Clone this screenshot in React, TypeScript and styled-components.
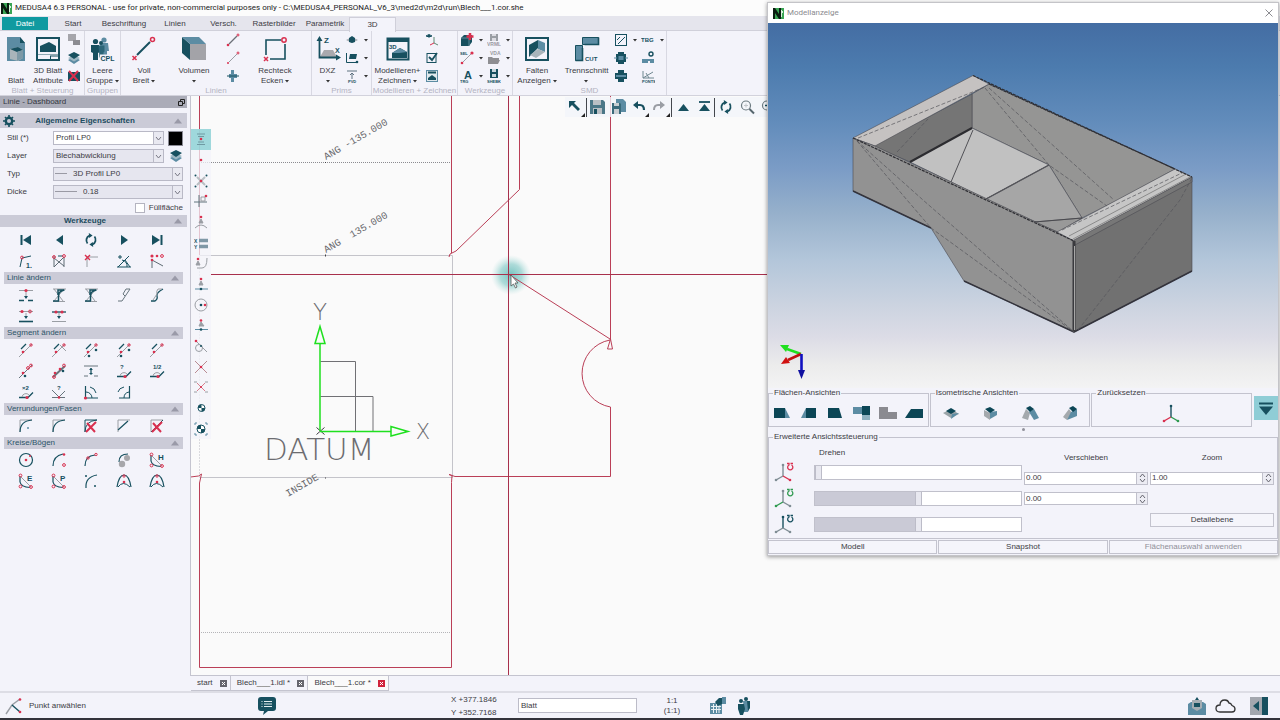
import React from "react";
import styled, { createGlobalStyle } from "styled-components";

const D = "#17505f";
const M = "#5c8ca3";
const R = "#d9304f";
const G = "#9a9ea4";
const RED = "#ba3f57";

const Global = createGlobalStyle`
  * { box-sizing: border-box; }
  body { margin: 0; background: #f3f3fa; font-family: "Liberation Sans", Arial, sans-serif; font-size: 8px; line-height: 10px; color: #3c3c44; }
  button, input, select { font: inherit; color: inherit; margin: 0; }
  svg { display: block; flex: none; }
`;

/* ---------- frame ---------- */
const Page = styled.div`
  position: relative;
  min-height: 100vh;
  display: flex;
  flex-direction: column;
  overflow: hidden;
`;
const TitleBar = styled.header`
  display: flex;
  align-items: center;
  gap: 3px;
  height: 16px;
  padding-left: 1px;
  background: #fcfcfc;
  font-family: Roboto, "Open Sans", sans-serif;
  font-size: 8px;
  color: #222;
  white-space: nowrap;
`;
const TabBar = styled.nav`
  display: flex;
  height: 15px;
  padding: 1px 0 0 2px;
  background: #e5e5ed;
  border-bottom: 1px solid #d0d0da;
`;
const MenuTab = styled.button<{ $w: number; $kind?: "file" | "active" }>`
  width: ${(p) => p.$w}px;
  height: ${(p) => (p.$kind === "active" ? 15 : 13)}px;
  padding: 0;
  border: 1px solid ${(p) => (p.$kind === "active" ? "#cfcfd9" : "transparent")};
  border-width: ${(p) => (p.$kind === "active" ? "1px 1px 0" : "0")};
  background: ${(p) => (p.$kind === "file" ? "#109aa0" : p.$kind === "active" ? "#f3f3fa" : "none")};
  color: ${(p) => (p.$kind === "file" ? "#fff" : "#3c3c44")};
  white-space: nowrap;
`;

/* ---------- ribbon ---------- */
const Ribbon = styled.div`
  display: flex;
  height: 65px;
  padding-left: 1px;
  border-bottom: 1px solid #d2d2dc;
`;
const RibbonGroup = styled.section<{ $w: number }>`
  display: flex;
  flex-direction: column;
  width: ${(p) => p.$w}px;
  border-right: 1px solid #d8d8e2;
`;
const RibbonBody = styled.div<{ $pad?: number }>`
  display: flex;
  height: 55px;
  padding-left: ${(p) => p.$pad ?? 0}px;
`;
const RibbonLabel = styled.div`
  height: 9px;
  line-height: 9px;
  text-align: center;
  color: #b4b4c2;
  white-space: nowrap;
  overflow: hidden;
`;
const BigButton = styled.button<{ $w: number }>`
  display: flex;
  flex-direction: column;
  align-items: center;
  flex: none;
  width: ${(p) => p.$w}px;
  gap: 4px;
  padding: 5px 0 0;
  border: 0;
  background: none;
  line-height: 10px;
  white-space: nowrap;
`;
const Line = styled.span`
  display: flex;
  align-items: center;
  justify-content: center;
  gap: 2px;
  height: 10px;
`;
const SmallColumn = styled.div<{ $w: number }>`
  display: grid;
  grid-template-rows: repeat(3, 18px);
  flex: none;
  width: ${(p) => p.$w}px;
`;
const SmallButton = styled.button`
  display: flex;
  align-items: center;
  padding: 0;
  border: 0;
  background: none;
`;
const SmallIcon = styled.span`
  display: flex;
  justify-content: center;
  width: 18px;
`;
const ArrowSlot = styled.span`
  display: flex;
  justify-content: center;
  width: 9px;
`;

/* ---------- sidebar ---------- */
const Main = styled.main`
  display: flex;
  flex: 1;
`;
const Sidebar = styled.aside`
  width: 190px;
  flex: none;
  padding-right: 3px;
`;
const DashTitle = styled.div`
  display: flex;
  align-items: center;
  justify-content: space-between;
  height: 12px;
  margin-bottom: 5px;
  padding: 0 2px 0 3px;
  background: #abacb8;
  color: #33363f;
`;
const SectionHead = styled.h2<{ $h: number }>`
  display: grid;
  grid-template-columns: 17px 1fr 34px;
  align-items: center;
  justify-items: center;
  height: ${(p) => p.$h}px;
  margin: 0;
  background: #cbcbd7;
  color: #1d4c60;
  font-size: 8px;
  font-weight: bold;
  & > svg:last-child {
    justify-self: end;
    margin-right: 5px;
  }
`;
const SubHead = styled.h3`
  display: flex;
  align-items: center;
  justify-content: space-between;
  height: 12px;
  margin: 1px 4px 0;
  padding: 0 4px 0 3px;
  background: #cbcbd7;
  color: #2c5468;
  font-size: 8px;
  font-weight: normal;
`;
const Form = styled.form`
  display: grid;
  grid-template-rows: repeat(4, 18px) 14px;
  padding: 1px 4px 0 7px;
`;
const Field = styled.div`
  display: grid;
  grid-template-columns: 46px 1fr auto;
  align-items: center;
`;
const SelectBox = styled.div`
  position: relative;
  height: 14px;
`;
const Select = styled.select<{ $indent: number; $white?: boolean }>`
  appearance: none;
  display: block;
  width: 100%;
  height: 14px;
  padding: 0 12px 0 ${(p) => p.$indent}px;
  border: 1px solid #b9b9c6;
  border-radius: 0;
  background: ${(p) => (p.$white ? "#fff" : "#e6e6ef")};
  line-height: 12px;
`;
const SelectMark = styled.span`
  position: absolute;
  right: 1px;
  top: 1px;
  width: 10px;
  height: 12px;
  border-left: 1px solid #b9b9c6;
  background: #e9e9f1;
  display: grid;
  place-items: center;
  pointer-events: none;
`;
const Stroke = styled.span<{ $w: number }>`
  position: absolute;
  left: 2px;
  top: 6px;
  width: ${(p) => p.$w}px;
  border-top: 1px solid #9a9aa4;
  pointer-events: none;
`;
const ColorButton = styled.button`
  width: 15px;
  height: 15px;
  margin-left: 4px;
  padding: 0;
  border: 1px solid #8a8a94;
  background: #000;
`;
const LayerButton = styled.button`
  width: 15px;
  height: 15px;
  margin-left: 4px;
  padding: 0;
  border: 0;
  background: none;
  display: grid;
  place-items: center;
`;
const CheckRow = styled.label`
  display: flex;
  align-items: center;
  justify-content: flex-end;
  gap: 4px;
`;
const Check = styled.input`
  appearance: none;
  width: 10px;
  height: 10px;
  border: 1px solid #b4b4c0;
  background: #fff;
`;
const ToolGrid = styled.div<{ $top?: number }>`
  display: grid;
  grid-template-columns: repeat(5, 1fr);
  grid-auto-rows: 21px;
  padding: ${(p) => p.$top ?? 0}px 14px 0 10px;
`;
const ToolButton = styled.button`
  display: grid;
  place-items: center;
  padding: 0;
  border: 0;
  background: none;
`;

/* ---------- canvas ---------- */
const Work = styled.div`
  display: flex;
  flex-direction: column;
  flex: 1;
  min-width: 0;
`;
const Canvas = styled.div`
  position: relative;
  flex: 1;
  min-height: 420px;
  overflow: hidden;
  border-left: 1px solid #c4c4cf;
  border-bottom: 1px solid #c4c4cf;
  background: #fafafa;
`;
const Sheet = styled.svg`
  position: absolute;
  left: 0;
  top: 0;
`;
const SnapBar = styled.div`
  position: absolute;
  left: 0;
  top: 33px;
  display: flex;
  flex-direction: column;
  width: 20px;
  height: 310px;
  background: rgba(243, 243, 250, 0.75);
`;
const SnapButton = styled.button<{ $on?: boolean }>`
  display: grid;
  place-items: center;
  flex: 1;
  padding: 0;
  border: 0;
  background: ${(p) => (p.$on ? "rgba(130, 206, 210, 0.75)" : "none")};
`;
const QuickBar = styled.div`
  position: absolute;
  left: 374px;
  top: 1px;
  display: flex;
  align-items: center;
  height: 20px;
`;
const QuickButton = styled.button`
  display: grid;
  place-items: center;
  width: 21px;
  height: 20px;
  padding: 0;
  border: 0;
  background: rgba(243, 245, 250, 0.8);
`;
const QuickSep = styled.span`
  width: 1px;
  height: 19px;
  background: #44474d;
`;
const SheetTabs = styled.div`
  display: flex;
  height: 15px;
  padding-left: 1px;
`;
const SheetTab = styled.button<{ $on?: boolean }>`
  display: flex;
  align-items: center;
  gap: 5px;
  height: 15px;
  padding: 0 3px 0 6px;
  border: 0;
  border-right: 1px solid #c4c4cf;
  border-bottom: 1px solid #c4c4cf;
  background: ${(p) => (p.$on ? "#fafafa" : "#f3f3fa")};
  white-space: pre;
`;

/* ---------- status bar ---------- */
const Status = styled.footer`
  display: flex;
  align-items: center;
  height: 29px;
  border-top: 2px solid #dddde5;
  border-bottom: 2px solid #33333b;
  padding: 0 12px 0 5px;
`;
const Hint = styled.div`
  display: flex;
  align-items: center;
  gap: 6px;
  width: 252px;
`;
const Message = styled.div`
  width: 194px;
`;
const Coords = styled.div`
  width: 67px;
  line-height: 13px;
`;
const StatusInput = styled.input`
  width: 119px;
  height: 15px;
  padding: 0 2px;
  border: 1px solid #bcbcc8;
  background: #fff;
`;
const Scale = styled.div`
  width: 70px;
  text-align: center;
`;
const StatusIcons = styled.div<{ $gap: number }>`
  display: flex;
  align-items: center;
  gap: ${(p) => p.$gap}px;
`;
const Spacer = styled.span`
  flex: 1;
`;

/* ---------- model window ---------- */
const ModelWindow = styled.section`
  position: absolute;
  right: 1px;
  top: 2px;
  width: 512px;
  border: 1px solid #c4c4c8;
  background: #f3f3fa;
  box-shadow: 0 1px 4px rgba(0, 0, 0, 0.4);
`;
const ModelTitle = styled.div`
  display: flex;
  align-items: center;
  gap: 3px;
  height: 20px;
  padding: 0 5px;
  background: #fff;
  color: #8b8b8f;
  font-family: Roboto, "Open Sans", sans-serif;
  font-size: 8px;
`;
const CloseButton = styled.button`
  margin-left: auto;
  padding: 0;
  border: 0;
  background: none;
`;
const View = styled.div`
  height: 365px;
  background: linear-gradient(#446da3 0%, #4c7bae 12%, #628cbb 27%, #7b9cc6 40%, #96b0cb 52%, #b3c6da 65%, #cbd3e0 77%, #dcdce6 86%, #ececec 94%, #f3f3f4 100%);
`;
const ViewRow = styled.div`
  display: flex;
  align-items: flex-start;
  gap: 1px;
  height: 39px;
`;
const Group = styled.fieldset<{ $h: number }>`
  flex: 1;
  min-width: 0;
  height: ${(p) => p.$h}px;
  margin: 0;
  padding: 0;
  border: 1px solid #c3c3ce;
`;
const Legend = styled.legend`
  margin-left: 4px;
  padding: 0 1px;
  line-height: 10px;
`;
const ViewButtons = styled.div`
  display: flex;
  height: 27px;
  padding-top: 3px;
`;
const ViewButton = styled.button`
  display: grid;
  place-items: center;
  flex: 1;
  padding: 0;
  border: 0;
  background: none;
`;
const CollapseButton = styled.button`
  display: grid;
  place-items: center;
  width: 24px;
  height: 24px;
  margin: 8px 0 0 1px;
  padding: 0;
  border: 0;
  background: #8fcdd6;
`;
const Splitter = styled.div`
  display: grid;
  place-items: center;
  height: 5px;
  &::after {
    content: "";
    width: 3px;
    height: 3px;
    border-radius: 2px;
    background: #92929c;
  }
`;
const Advanced = styled.div`
  display: grid;
  grid-template-columns: 1fr 124px 124px;
  gap: 2px;
  padding-right: 3px;
`;
const RotateCol = styled.div`
  display: grid;
  grid-template-rows: 15px repeat(3, 26px);
  padding-top: 2px;
`;
const RotateTitle = styled.div`
  padding: 4px 0 0 50px;
`;
const RotateRow = styled.div`
  display: grid;
  grid-template-columns: 45px 1fr;
  align-items: center;
`;
const RotateIcon = styled.span`
  padding-left: 5px;
`;
const Slider = styled.input<{ $fill: number }>`
  appearance: none;
  display: block;
  width: 100%;
  height: 15px;
  margin: 0;
  border: 1px solid #c0c0cb;
  background: linear-gradient(90deg, #cacad6 ${(p) => p.$fill}%, #fff ${(p) => p.$fill}%);
  &::-webkit-slider-thumb {
    appearance: none;
    width: 7px;
    height: 13px;
    border: 1px solid #bcbcc8;
    border-width: 0 1px;
    background: #e8e8f0;
  }
`;
const ValueCol = styled.div`
  display: grid;
  grid-template-rows: 20px 20px 21px 21px;
  align-items: center;
  padding-top: 6px;
`;
const ColTitle = styled.div`
  text-align: center;
`;
const Spin = styled.div`
  display: grid;
  grid-template-columns: 1fr 11px;
  height: 13px;
  border: 1px solid #c0c0cb;
`;
const SpinInput = styled.input`
  min-width: 0;
  padding: 0 1px;
  border: 0;
  background: #fff;
`;
const SpinButton = styled.button`
  display: grid;
  place-items: center;
  padding: 0;
  border: 0;
  border-left: 1px solid #c0c0cb;
  background: #ececf3;
`;
const FlatButton = styled.button`
  height: 14px;
  padding: 0;
  border: 1px solid #c3c3ce;
  background: #f5f5fb;
  line-height: 10px;
  &:disabled { color: #8f8f98; }
`;
const Actions = styled.div`
  display: grid;
  grid-template-columns: repeat(3, 1fr);
  gap: 1px;
  padding: 1px 0;
`;

/* ---------- icons ---------- */
type IconProps = { w?: number; h?: number; box?: string; children: React.ReactNode };
const Svg = ({ w = 16, h = 16, box, children }: IconProps) => (
  <svg width={w} height={h} viewBox={box ?? `0 0 ${w} ${h}`} fill="none" stroke={D} strokeWidth="1" aria-hidden="true">
    {children}
  </svg>
);
const Dot = ({ x, y, c = R, r = 1.3 }: { x: number; y: number; c?: string; r?: number }) => (
  <circle cx={x} cy={y} r={r} fill={c} stroke="none" />
);
const Ring = ({ x, y, r = 1.4, c = R }: { x: number; y: number; r?: number; c?: string }) => (
  <circle cx={x} cy={y} r={r} stroke={c} />
);
const Cap = ({ x, y, s = 6, c = D, children }: { x: number; y: number; s?: number; c?: string; children: string }) => (
  <text x={x} y={y} fontSize={s} fontWeight="bold" fill={c} stroke="none" fontFamily="Liberation Sans, sans-serif">
    {children}
  </text>
);
const Caret = () => (
  <Svg w={4} h={3}><path d="M0 0h4L2 2.6z" fill="#333" stroke="none" /></Svg>
);
const Fold = () => (
  <Svg w={8} h={6}><path d="M0 5.5h8L4 .5z" fill="#9a9aa8" stroke="none" /></Svg>
);
const Logo = () => (
  <Svg w={11} h={11}>
    <rect width="11" height="11" fill="#3aa554" stroke="none" />
    <path d="M0 0h2l4 6V0h2v11H6L2 5v6H0z" fill="#0a1c10" stroke="none" />
    <path d="M8.5 2v7M9.5 3v2" stroke="#d8f2dc" />
  </Svg>
);
const Refresh = () => (
  <Svg w={14} h={14}>
    <path d="M3.500 10.500A5 5 0 0 1 5.500 2.700M10.500 3.500a5 5 0 0 1-2 7.800" strokeWidth="1.800" />
    <path d="M4.800 0l3.800 2.500-3.400 2.600zM9.200 14L5.400 11.500l3.400-2.600z" fill={D} stroke="none" />
  </Svg>
);

const big: Record<string, React.ReactNode> = {
  sheet: (
    <Svg w={26} h={26}>
      <path d="M4 1h13l5 6v18H4z" fill={M} stroke="none" />
      <path d="M17 1l5 6h-5z" fill={D} stroke="none" />
      <path d="M7 13l8-2 5 3v8l-5 3-8-2z" fill="#a9b4ba" stroke="none" />
      <path d="M7 13l8-2 5 3-6 2z" fill={D} stroke="none" />
      <path d="M14 16l6-2v8l-6 3z" fill="#7d99a6" stroke="none" />
    </Svg>
  ),
  sheet3d: (
    <Svg w={26} h={26}>
      <rect x="2" y="2" width="22" height="22" strokeWidth="2" />
      <path d="M5 10l9-4 7 4v6H5z" fill={D} stroke="none" />
      <path d="M3 18.500h20" stroke="#8fa9b3" />
      <rect x="15.500" y="20" width="8" height="3.500" />
    </Svg>
  ),
  group: (
    <Svg w={26} h={26}>
      <g stroke="none">
        <circle cx="14" cy="4" r="2.600" fill={M} />
        <path d="M10 7h8l1 8h-2v8h-6z" fill={M} />
        <circle cx="5.500" cy="5.500" r="2.600" fill={D} />
        <path d="M1 9h8l1 7-2 1v7H3v-7l-2-1z" fill={D} />
        <circle cx="11" cy="7" r="2" fill={D} />
        <path d="M8.500 9.500h6v6l-1 1v5h-4z" fill="#2c6678" />
      </g>
      <rect x="10" y="18.500" width="16" height="7" fill="#f3f3fa" stroke="none" />
      <Cap x={10.5} y={25} s={7}>CPL</Cap>
    </Svg>
  ),
  line: (
    <Svg w={26} h={26}>
      <path d="M6 19L19 6" strokeWidth="2" />
      <circle cx="21.500" cy="3.500" r="2" stroke={R} strokeWidth="1.500" />
      <path d="M1.500 20l4 4m0-4l-4 4" stroke={R} strokeWidth="1.500" />
    </Svg>
  ),
  volume: (
    <Svg w={26} h={26}>
      <path d="M9 8h16v16H9z" fill="#a3a3a8" stroke="none" />
      <path d="M1 1l8 7v16l-8-7z" fill={D} stroke="none" />
      <path d="M1 1h17l7 7H9z" fill={M} stroke="none" />
    </Svg>
  ),
  rect: (
    <Svg w={26} h={26}>
      <path d="M19 4H4v15M8 23h15V8" strokeWidth="1.600" />
      <circle cx="22" cy="4" r="2.200" stroke={R} strokeWidth="1.500" />
      <path d="M2 21l4 4m0-4l-4 4" stroke={R} strokeWidth="1.500" />
    </Svg>
  ),
  dxz: (
    <Svg w={26} h={26}>
      <path d="M5 21l4-7h9l4 7z" fill="#a9a9ae" stroke="none" />
      <path d="M4.500 3v18.500H24" strokeWidth="1.800" />
      <path d="M4.500 0l3 5h-6zM26 21.500l-5 3v-6z" fill={D} stroke="none" />
      <Cap x={9} y={7} s={8}>Z</Cap>
      <Cap x={20} y={17} s={7}>X</Cap>
    </Svg>
  ),
  model: (
    <Svg w={26} h={26}>
      <path d="M2.500 2.500h21v21h-21z" strokeWidth="2" />
      <path d="M2 2h22v4H2z" fill={D} stroke="none" />
      <Cap x={4} y={13} s={6}>3D</Cap>
      <path d="M7 17l8-5 7 4v6H7z" fill={D} stroke="none" />
      <path d="M15 12l7 4-8 1-7 0z" fill={M} stroke="none" />
    </Svg>
  ),
  fold: (
    <Svg w={26} h={26}>
      <rect x="2" y="2" width="22" height="22" stroke={D} strokeWidth="2" />
      <path d="M5 9l9-5v8l-9 9z" fill={D} stroke="none" />
      <path d="M14 4l7 3v9l-7-3z" fill={M} stroke="none" />
      <path d="M6 19l8-6 7 3-9 6z" fill="#a9b4ba" stroke="none" />
    </Svg>
  ),
  cut: (
    <Svg w={26} h={26}>
      <path d="M8.500 1.500h16v7h-16z" fill={M} />
      <path d="M1.500 9.500h7v15h-7z" fill={M} />
      <path d="M24.500 1.500v7h-14M8.500 12v12.500h-7" strokeWidth="1.600" />
      <Cap x={11} y={25} s={6}>CUT</Cap>
    </Svg>
  ),
};

const small: Record<string, React.ReactNode> = {
  step: <Svg w={14} h={14}><path d="M1 1h8v7H1z" fill="#a5a5ab" stroke="none" /><path d="M6 7h7v5H6z" fill="#8b8b91" stroke="none" /></Svg>,
  layers: (
    <Svg w={14} h={14}>
      <path d="M7 6l6 3-6 4-6-4z" fill={M} stroke="none" />
      <path d="M7 4l6 3-6 3.500L1 7z" fill="#9db7c2" stroke="none" />
      <path d="M7 1l6 3-6 4-6-4z" fill={D} stroke="none" />
    </Svg>
  ),
  del: <Svg w={14} h={14}><path d="M1 3h12v9H1z" fill={D} stroke="none" /><path d="M2 2l9 10m0-10l-9 10" stroke={R} strokeWidth="2" /></Svg>,
  seg1: <Svg w={14} h={14}><path d="M3 11L11 3" strokeWidth="1.200" stroke="#6b7078" /><Ring x={12} y={2} r={1} /><Dot x={2} y={12} /></Svg>,
  seg2: <Svg w={14} h={14}><path d="M3 11L11 3" stroke={G} /><Ring x={12} y={2} r={1} /><Dot x={2} y={12} r={1} /></Svg>,
  axis: <Svg w={14} h={14}><path d="M3 5h2V1h3v4h3v4H8v4H5V9H3z" fill={M} stroke="none" /><path d="M1 7h12" /></Svg>,
  plane: <Svg w={14} h={12}><path d="M1 6l6-3 6 3-6 3z" fill="#a5adb3" stroke="none" /><path d="M4 4l3-2 3 2v4l-3 1-3-1z" fill={D} stroke="none" /></Svg>,
  plane2: <Svg w={14} h={12}><path d="M5 2h7l-1 5H4z" fill={D} stroke="none" /><path d="M1.500 1v9.500H12" /><Dot x={12} y={10} c={D} /></Svg>,
  pipe: <Svg w={14} h={14}><path d="M2 2h10M7 10V4M5 6l2-2 2 2" stroke="#5f7280" /><Cap x={3} y={14} s={4}>PVD</Cap></Svg>,
  eye: <Svg w={14} h={14}><path d="M1 3q3-3 6 0-3 2-6 0z" /><Dot x={4} y={3} c={D} /><path d="M9 4v6l4 2" stroke="#5f8a74" /><path d="M9 10l-4 2" stroke={R} /></Svg>,
  check: <Svg w={14} h={14}><rect x="2" y="2.500" width="9" height="9" /><path d="M4 6l3 3 5-7" strokeWidth="1.800" /></Svg>,
  window: <Svg w={14} h={14}><rect x="1.500" y="1.500" width="11" height="11" fill="#dfe8ec" stroke={M} /><path d="M3 3.500h8" strokeWidth="2" /><path d="M3 9l4-3 4 3v2H3z" fill={D} stroke="none" /></Svg>,
  cube: <Svg w={14} h={14}><path d="M1 5l3-3h8v7l-3 4H1z" fill={D} stroke="none" /><path d="M1 5h8v8" stroke="#5f8a99" /><path d="M10 0v7M6.500 3.500h7" stroke={R} strokeWidth="2.500" /></Svg>,
  vrml: <Svg w={14} h={14}><path d="M3 1h8v7H3z" fill={G} stroke="none" /><path d="M5 1h4v2H5zM5 5h4v3H5z" fill="#dcdce2" stroke="none" /><Cap x={0} y={13} s={5} c="#9a9aa2">VRML</Cap></Svg>,
  sel: <Svg w={14} h={14}><path d="M2 12L11 3" stroke={G} /><Dot x={2} y={12} /><Dot x={12} y={2} r={1.6} /><Cap x={0} y={4} s={4}>SEL</Cap></Svg>,
  vda: <Svg w={14} h={14}><Cap x={3} y={4} s={5} c="#9a9aa2">VDA</Cap><path d="M1 6h4l1 1h6v2h1l-2 4H1z" fill="#8e8e92" stroke="none" /></Svg>,
  text: <Svg w={14} h={14}><Cap x={4} y={10} s={11}>A</Cap><Cap x={0} y={13.500} s={4}>TRG</Cap></Svg>,
  save: <Svg w={14} h={14}><path d="M3 0h8v9H3z" fill={D} stroke="none" /><path d="M5 0h4v3H5zM5 5h4v3H5z" fill="#c9d8de" stroke="none" /><Cap x={0} y={13.500} s={4}>SHEBK</Cap></Svg>,
  diag: <Svg w={14} h={14}><rect x="1.500" y="1.500" width="11" height="11" /><path d="M4 11l7-7M3 7l3-3" /></Svg>,
  tbg: <Svg w={14} h={14}><Cap x={0} y={9} s={6}>TBG</Cap></Svg>,
  gear: <Svg w={14} h={14}><path d="M4 1h6v2h2v8h-2v2H4v-2H2V3h2z" fill={D} stroke="none" /><rect x="4.500" y="5" width="5" height="4" fill={M} stroke="none" /><path d="M0 7h3M11 7h3" stroke={M} /></Svg>,
  gear2: <Svg w={14} h={14}><path d="M4 1h6v3h3v6h-3v3H4v-3H1V4h3z" fill={D} stroke="none" /><path d="M2 6h10v2H2z" fill={M} stroke="none" /></Svg>,
  slot: <Svg w={14} h={14}><path d="M1 8h12v4H9v-2H7v2H1z" fill={M} stroke="none" /><circle cx="10" cy="3" r="2" strokeWidth="1.400" /></Svg>,
  norm: <Svg w={14} h={14}><path d="M2 2v7h11M2 9L12 3M5 4l3 5" stroke="#6f8790" /><Cap x={1} y={13.500} s={4}>PONTS</Cap></Svg>,
};

const poly = (d: string, c = "#5d6a72") => <path d={d} stroke={c} />;
const segIcon = (extra: React.ReactNode) => (
  <Svg><path d="M1 15L14 2" stroke={G} /><path d="M3 7l5-5" stroke={D} strokeWidth="1.300" /><Ring x={13} y={3} r={1.2} /><Dot x={5} y={10} />{extra}</Svg>
);
const angleIcon = (label: string) => (
  <Svg><path d="M1 13.500h9l5-5" strokeWidth="1.300" /><path d="M4 13a4 4 0 0 1 7-2" stroke={G} /><Dot x={9} y={13.5} r={1.6} /><Cap x={4} y={6} s={6}>{label}</Cap></Svg>
);
const arcIcon = (label: string) => (
  <Svg><path d="M2 3v6q1 5 10 5.500" strokeWidth="1.200" /><path d="M2 3l11 11" stroke={G} /><Ring x={2.5} y={2.5} /><Ring x={2.5} y={13.500} /><Ring x={13} y={14} /><Cap x={9} y={7.500} s={8}>{label}</Cap></Svg>
);
const cross = <path d="M4 5l8 9m1-10L3 14" stroke={R} strokeWidth="2" />;
const mirror = (
  <Svg>
    <path d="M2 2h13M2 14.500h12M3 2l9 12M13 2L3 14" stroke={G} />
    <path d="M7.500 14V9q0-5 6-6M2 14h6M7 8V3h6" strokeWidth="1.500" />
  </Svg>
);

const tools: { title?: string; items: [string, React.ReactNode][] }[] = [
  {
    items: [
      ["Erster Punkt", <Svg><path d="M3.500 3v10" strokeWidth="2" /><path d="M13 3v10L5 8z" fill={D} stroke="none" /></Svg>],
      ["Zurück", <Svg><path d="M12 3v10L5 8z" fill={D} stroke="none" /></Svg>],
      ["Richtung", <Refresh />],
      ["Weiter", <Svg><path d="M5 3v10l7-5z" fill={D} stroke="none" /></Svg>],
      ["Letzter Punkt", <Svg><path d="M12.500 3v10" strokeWidth="2" /><path d="M3 3v10l8-5z" fill={D} stroke="none" /></Svg>],
      ["Punkt 1", <Svg><path d="M2 14L4 5l9-2" /><Ring x={4} y={4.500} /><Cap x={8} y={14.500} s={7}>1.</Cap></Svg>],
      ["Schraffur", <Svg>{poly("M3 3v11L13 4v10M3 5l10 8")}<path d="M7 3h5" stroke={D} /><Ring x={3} y={4} /><Ring x={13} y={3} /></Svg>],
      ["Punkt löschen", <Svg>{poly("M4 4v10M4 4h11", G)}<path d="M2 2l5 5m0-5L2 7" stroke={R} strokeWidth="1.400" /></Svg>],
      ["Winkel", <Svg><path d="M1 14h14M2 14L13 3" /><path d="M6 7a6 6 0 0 1 5 7M9 7l5 7" /><path d="M2 4h4M4 2v4" /></Svg>],
      ["Mehrfach", <Svg><path d="M3 15V7l11 6" stroke="#5d6a72" /><Dot x={3} y={3} r={1.6} /><Dot x={8} y={3} /><Ring x={13} y={3} /><Dot x={3} y={7} /></Svg>],
    ],
  },
  {
    title: "Linie ändern",
    items: [
      ["Punkt einfügen", <Svg><path d="M1 3.500h14M8 5v6" stroke={G} /><path d="M1 13.500h5m4 0h5" strokeWidth="1.600" /><path d="M6 9l2 3 2-3z" fill={D} stroke="none" /><Dot x={8} y={3.5} r={1.600} /></Svg>],
      ["Spiegeln X", mirror],
      ["Spiegeln Y", mirror],
      ["Strecken", <Svg><path d="M2 14h4L14 2h-4L7 7l2 2" stroke="#66747c" /></Svg>],
      ["Glätten", <Svg><path d="M2 14h4q3-2 2-5T14 2" strokeWidth="1.300" /><path d="M13 2H9q-2 2-1 5L4 13" stroke={G} /></Svg>],
      ["Verbinden", <Svg><path d="M1 3.500h14M8 5v4" stroke={G} /><path d="M1 13.500h14" strokeWidth="1.600" /><path d="M6 8l2 3 2-3z" fill={D} stroke="none" /><Dot x={4} y={3.500} r={1.600} /><Ring x={12} y={3.500} /></Svg>],
      ["Trennen", <Svg><path d="M1 4h14" strokeWidth="1.300" /><path d="M1 13.500h14M8 5v4" stroke={G} /><path d="M6 8l2 3 2-3z" fill={D} stroke="none" /><Dot x={5} y={4} r={1.600} /><Dot x={11} y={4} r={1.600} /></Svg>],
    ],
  },
  {
    title: "Segment ändern",
    items: [
      ["Parallel", segIcon(null)],
      ["Verlängern", segIcon(<path d="M9 3l6 6" stroke={G} />)],
      ["Verschieben", segIcon(<><Dot x={13} y={8} c={D} /><Dot x={6} y={14} c={D} /></>)],
      ["Drehen", segIcon(<><Dot x={13} y={8} c={D} /><Dot x={5} y={14} c={D} /></>)],
      ["Kürzen", segIcon(null)],
      ["Länge", <Svg><path d="M1 15L14 2" stroke="#66747c" /><Dot x={5} y={10} /><Ring x={10} y={5} /><Ring x={13} y={2.500} /><Dot x={7} y={13} c={D} /></Svg>],
      ["Teilen", <Svg><path d="M2 14L14 3" strokeWidth="2" stroke="#66747c" /><Dot x={4} y={10} /><Dot x={9} y={6} /><Ring x={13} y={2.500} /><Dot x={12} y={8} c={D} /><Ring x={3} y={14} /></Svg>],
      ["Abstand", <Svg><path d="M1 3h14M1 13h4m6 0h4" stroke="#66747c" /><path d="M8 5v6" strokeWidth="1.300" /><path d="M6 7l2-2 2 2zM6 10l2 2 2-2z" fill={D} stroke="none" /></Svg>],
      ["Winkel abfragen", angleIcon("?")],
      ["Winkel halbieren", angleIcon("1/2")],
      ["Winkel verdoppeln", angleIcon("×2")],
      ["Winkel prüfen", <Svg><path d="M1 6l7 7 6-6M1 13.500h13" stroke="#66747c" /><Dot x={8} y={13.500} /><Cap x={6} y={6} s={6}>?</Cap></Svg>],
      ["Winkel links", <Svg><path d="M2.500 2v12H15" strokeWidth="1.200" /><path d="M3 8a6 6 0 0 1 6 6M7 3q5 1 6 6" /><Dot x={2.500} y={14} r={1.600} /></Svg>],
      ["Winkel rechts", <Svg><path d="M13.500 2v12H3" strokeWidth="1.200" /><path d="M13 8a6 6 0 0 0-5 6M2 8q1-4 6-5" /></Svg>],
    ],
  },
  {
    title: "Verrundungen/Fasen",
    items: [
      ["Verrundung mit Punkt", <Svg><path d="M2 14V2h12" stroke={G} /><path d="M2 14q0-11 12-12" strokeWidth="1.200" /><Dot x={10} y={10} c={M} r={1} /></Svg>],
      ["Verrundung", <Svg><path d="M2 14V2h12" stroke={G} /><path d="M2 14q0-11 12-12" strokeWidth="1.200" /></Svg>],
      ["Verrundung löschen", <Svg><path d="M2 14V2h12" stroke={D} /><path d="M2 14q0-11 12-12" />{cross}</Svg>],
      ["Fase", <Svg><path d="M2 14V2h12" stroke={G} /><path d="M2 12L12 3" strokeWidth="1.200" /></Svg>],
      ["Fase löschen", <Svg><path d="M2 14V2h12" stroke={G} /><path d="M2 14L14 2" />{cross}</Svg>],
    ],
  },
  {
    title: "Kreise/Bögen",
    items: [
      ["Kreis", <Svg><circle cx="8" cy="8" r="6.500" strokeWidth="1.200" /><Dot x={8} y={8} /><Dot x={12} y={4} r={1} /></Svg>],
      ["Bogen 1", <Svg><path d="M2 14q0-10 10-12" strokeWidth="1.200" /><Dot x={13} y={2.500} /><Ring x={13} y={13} /></Svg>],
      ["Bogen 2", <Svg><path d="M2 14q0-10 10-11" strokeWidth="1.200" /><Ring x={5} y={6} r={1.200} /><Ring x={13} y={2.500} r={1.200} /></Svg>],
      ["Tangente", <Svg><path d="M3 10q0-8 9-8" strokeWidth="1.200" /><circle cx="11" cy="6" r="3" fill="#a7a7ab" stroke="none" /><circle cx="6" cy="12" r="3.200" fill="#a7a7ab" stroke="none" /></Svg>],
      ["Bogen H", arcIcon("H")],
      ["Bogen E", arcIcon("E")],
      ["Bogen P", arcIcon("P")],
      ["Bogen Mitte", <Svg><path d="M3 15q-1-11 11-13" strokeWidth="1.200" /><Dot x={12} y={13} c={D} r={1} /><Dot x={3} y={3} c={D} r={1} /></Svg>],
      ["Bogen außen", <Svg><path d="M1 14Q3 2 8 2t7 12" strokeWidth="1.200" /><path d="M2 14q5-7 12 0" /><Ring x={8} y={3} r={1.200} /><Dot x={8} y={9} /></Svg>],
      ["Bogen innen", <Svg><path d="M1 14Q3 2 8 2t7 12" strokeWidth="1.200" /><path d="M2 14q5-7 12 0" /><Ring x={8} y={3} r={1.200} /><Dot x={8} y={9} /></Svg>],
    ],
  },
];

const s14 = (c: React.ReactNode) => <Svg w={14} h={14}>{c}</Svg>;
const snaps: [string, React.ReactNode][] = [
  ["Automatisch", s14(<><path d="M3 2h8M4 4.500h6M4 10h6M3 12.500h8" stroke="#6f9aa3" /><Dot x={7} y={7} /></>)],
  ["Frei", s14(<Dot x={7} y={7} />)],
  ["Punkte", s14(<><path d="M3 3l8 8m0-8l-8 8" stroke="#b9bec3" strokeWidth="2" /><Dot x={7} y={7} /><Dot x={1.500} y={1.500} c={D} r={1} /><Dot x={12.500} y={1.500} c={D} r={1} /><Dot x={1.500} y={12.500} c={D} r={1} /><Dot x={12.500} y={12.500} c={D} r={1} /></>)],
  ["Raster", s14(<><path d="M5 1v12M0 8h13" stroke="#60757d" /><path d="M7 3h4v4H7z" stroke={G} /><Dot x={12} y={2} /></>)],
  ["Segment", s14(<><path d="M1 13q6-6 12 0" stroke={G} /><path d="M5 8h4L7 4z" fill={G} stroke={G} /><Dot x={7} y={2} /></>)],
  ["XY", s14(<><Cap x={0} y={6.500} s={5}>X</Cap><Cap x={0} y={12.500} s={5}>Y</Cap><path d="M5 4.500h9M5 10.500h9" stroke="#7f98a6" strokeWidth="3.500" /></>)],
  ["Kurve", s14(<><path d="M3 12h5q5 0 5-10" stroke={G} /><path d="M2 9h4L4 5z" fill={G} stroke={G} /><Dot x={4} y={3} /></>)],
  ["Winkel", s14(<><path d="M1 12h13" stroke={M} /><path d="M5 8h4L7 4z" fill={G} stroke={G} /><Dot x={7} y={2} /><Dot x={7} y={12} c={D} /></>)],
  ["Mittelpunkt", s14(<><circle cx="7" cy="7" r="6" stroke={G} /><Dot x={7} y={7} c={D} /><Dot x={11} y={7} /></>)],
  ["Lot", s14(<><path d="M1 11.500h13" stroke={M} /><path d="M5 8h5L7 4z" fill={G} stroke={G} /><Dot x={7} y={2.500} /><Dot x={7} y={11.500} c={D} /></>)],
  ["Tangente", s14(<><circle cx="5" cy="9" r="3.500" stroke={G} /><path d="M2 2l11 11" stroke={G} /><Dot x={2} y={2} /><Dot x={7} y={7} c={D} r={1} /></>)],
  ["Schnittpunkt", s14(<><path d="M1 1l12 12M13 1L1 13" stroke="#b98b92" /><Dot x={7} y={7} /></>)],
  ["Kreuzung", s14(<><path d="M3 3l8 8m0-8l-8 8" stroke="#d77f8d" /><path d="M0 2h3M11 2h3M0 12h3M11 12h3" stroke={G} /><Dot x={7} y={7} r={1} /></>)],
  ["Schwerpunkt", s14(<><circle cx="7.500" cy="7" r="3.500" fill="#fff" /><path d="M7.500 7V3.500A3.500 3.500 0 0 0 4 7zM7.500 7v3.500A3.500 3.500 0 0 0 11 7z" fill={D} stroke="none" /></>)],
  ["Schwerpunkt Gruppe", s14(<><circle cx="7" cy="7" r="4" fill="#fff" /><path d="M7 7V3a4 4 0 0 0-4 4zM7 7v4a4 4 0 0 0 4-4z" fill={D} stroke="none" /><path d="M1 3V1h2M11 1h2v2M13 11v2h-2M3 13H1v-2" stroke={M} /></>)],
];

const corner = <path d="M20 16v4h-4z" fill="#222" stroke="none" />;
const quick: ([string, React.ReactNode] | null)[] = [
  ["Auswahl", <Svg w={21} h={20}><path d="M4 4h7L9 6l6 6-2 2-6-6-3 3z" fill={D} stroke="none" />{corner}</Svg>],
  null,
  ["Speichern", <Svg w={21} h={20}><path d="M3 3h13l2 2v12H3z" fill="#4b7787" stroke="none" /><path d="M6 3h8v5H6zM6 11h9v6H6z" fill="#b9bfc4" stroke="none" /><path d="M7 12h3v5H7z" fill={D} stroke="none" /></Svg>],
  ["Alle speichern", <Svg w={21} h={20}><path d="M8 2h7l3 3v10H8z" fill={M} stroke="none" /><path d="M4 6h8l1 1v10H4z" fill="#396a7b" stroke="none" /><path d="M6 6h5v3H6zM6 12h5v5H6z" fill="#c8ced2" stroke="none" /></Svg>],
  ["Rückgängig", <Svg w={21} h={20}><path d="M7 8h4q4 0 4 5" strokeWidth="2.200" /><path d="M4 8l5-4v8z" fill={D} stroke="none" />{corner}</Svg>],
  ["Wiederholen", <Svg w={21} h={20}><path d="M12 8H8q-4 0-4 5" stroke={G} strokeWidth="2" /><path d="M15 8l-5-4v8z" fill={G} stroke="none" />{corner}</Svg>],
  null,
  ["Nach oben", <Svg w={21} h={20}><path d="M6 14h11l-5.500-7z" fill={D} stroke="none" /></Svg>],
  ["Ganz nach oben", <Svg w={21} h={20}><path d="M6 5h11" strokeWidth="1.800" /><path d="M6 14h11l-5.500-7z" fill={D} stroke="none" /></Svg>],
  null,
  ["Neu zeichnen", <Refresh />],
  ["Zoom", <Svg w={21} h={20}><circle cx="10" cy="8.500" r="4.500" stroke="#6c7a80" strokeWidth="1.200" /><path d="M13.500 12l4.500 4.500" strokeWidth="2" stroke="#56666d" /><path d="M8 8.500h4M10 6.500v4" stroke="#c0c5c9" /></Svg>],
  ["Verkleinern", <Svg w={21} h={20}><circle cx="10" cy="8.500" r="4.500" stroke="#6c7a80" strokeWidth="1.200" /><path d="M8 8.500h4" strokeWidth="1.500" /></Svg>],
];

/* ---------- composed parts ---------- */
const Big = ({ w, icon, lines, menu }: { w: number; icon: string; lines: string[]; menu?: boolean }) => (
  <BigButton $w={w}>
    {big[icon]}
    <span>
      {lines.map((t, i) => (
        <Line key={i}>{t}{menu && i === 1 && <Caret />}</Line>
      ))}
    </span>
  </BigButton>
);
const Smalls = ({ w, icons, menu }: { w: number; icons: string[]; menu?: boolean[] }) => (
  <SmallColumn $w={w}>
    {icons.map((n, i) => (
      <SmallButton key={n} aria-label={n}>
        <SmallIcon>{small[n]}</SmallIcon>
        {menu?.[i] && <ArrowSlot><Caret /></ArrowSlot>}
      </SmallButton>
    ))}
  </SmallColumn>
);
const Combo = ({ id, value, indent = 2, white, stroke }: { id: string; value: string; indent?: number; white?: boolean; stroke?: number }) => (
  <SelectBox>
    <Select id={id} $indent={indent} $white={white}><option>{value}</option></Select>
    {stroke && <Stroke $w={stroke} />}
    <SelectMark><Svg w={7} h={5}><path d="M1 1l2.500 3L6 1" stroke="#777783" /></Svg></SelectMark>
  </SelectBox>
);
const SpinField = ({ label, value }: { label: string; value: string }) => (
  <Spin>
    <SpinInput aria-label={label} defaultValue={value} inputMode="decimal" />
    <SpinButton aria-label={label + " ändern"}>
      <Svg w={7} h={10}><path d="M1 4l2.500-3L6 4M1 6l2.500 3L6 6" stroke="#66666f" /></Svg>
    </SpinButton>
  </Spin>
);
const CloseMark = ({ c }: { c: string }) => (
  <Svg w={7} h={7}><rect width="7" height="7" fill={c} stroke="none" /><path d="M2 2l3 3m0-3L2 5" stroke="#fff" /></Svg>
);
const Axes = ({ a, b, c, turn }: { a: string; b: string; c: string; turn?: string }) => (
  <Svg w={20} h={20}>
    <path d="M9 3v11" stroke={a} strokeWidth="1.400" />
    <path d="M9 14l-7 4" stroke={b} strokeWidth="1.400" />
    <path d="M9 14l7 4" stroke={c} strokeWidth="1.400" />
    <Dot x={9} y={3} c={a} /><Dot x={2} y={18} c={b} /><Dot x={16} y={18} c={c} />
    {turn && <path d="M13 1.500h2v1.500a2.600 2.600 0 1 0 2.500 0M16.500 1.500h2.500" stroke={turn} strokeWidth="1.300" />}
  </Svg>
);

const Drawing = () => (
  <Sheet width="1088" height="580" viewBox="191 96 1088 580" fill="none" stroke={RED} strokeWidth="1">
    <defs>
      <radialGradient id="halo">
        <stop offset="0" stopColor="#5fb9b6" stopOpacity="0.850" />
        <stop offset="0.550" stopColor="#84cac7" stopOpacity="0.650" />
        <stop offset="1" stopColor="#b5e0de" stopOpacity="0" />
      </radialGradient>
    </defs>
    <g stroke="#c4c4ca">
      <path d="M199.500 255.500H452.500V477.500H199.500" />
      <path d="M199.500 256V477" stroke="#dadade" strokeDasharray="2 1" />
      <path d="M199 162.500H451" stroke="#8b8b90" strokeDasharray="1 1" />
      <path d="M199 632.500H451" stroke="#b4b4b8" strokeDasharray="1 1" />
    </g>
    <path d="M199.500 96V255" />
    <path d="M451.500 96V253" />
    <path d="M519.500 96V189.500L456 251l-6 3-1 3" />
    <path d="M610.500 96V339.500" />
    <path d="M610 340A34 34 0 0 0 610.500 407V476.500H455l-6-2 3 1-0.500 7V667.500H199.500V483l2-9-3 2-8 1" />
    <path d="M610.500 339l-3 10h5z" />
    <circle cx="511" cy="275" r="20" fill="url(#halo)" stroke="none" />
    <path d="M509 274.500L610 339" />
    <path d="M508.500 96V676M211 274.500H1279" stroke="#a8304c" />
    <g stroke="#3f3f42">
      <path d="M320.500 361.500h35V431M320.500 396.500h52.500V431" stroke="#707074" />
      <path d="M316.500 427.500l8 7m0-7l-8 7" />
      <path d="M325 255.500h1" strokeWidth="2" />
      <path d="M325 162.500h1M325 478h1" />
    </g>
    <g stroke="#1fe01f" strokeWidth="1.500">
      <path d="M320 431V344M315 343.500l5-17 5 17zM320 431.500h71M391 426.500v9.500l17-4.500z" />
    </g>
    <g fill="#6c6c70" stroke="none" fontFamily="'DejaVu Sans Light', 'DejaVu Sans', sans-serif" fontWeight="200">
      <text x="320" y="320" fontSize="23" textAnchor="middle">Y</text>
      <text x="423" y="439" fontSize="21" textAnchor="middle">X</text>
      <text x="264" y="460" fontSize="31">DATUM</text>
    </g>
    <g fill="#66666b" stroke="none" fontFamily="'Liberation Mono', monospace" fontSize="10" style={{ whiteSpace: "pre" }}>
      <text transform="translate(326 160) rotate(-30)">ANG -135.000</text>
      <text transform="translate(326 253) rotate(-30)">{"ANG\u00a0\u00a0135.000"}</text>
      <text transform="translate(288 497) rotate(-30)">INSIDE</text>
    </g>
    <path d="M511 275v11l2.500-2 2 4 1.500-1-2-4h3z" fill="#fff" stroke="#555" strokeWidth="0.800" />
  </Sheet>
);

const Model = () => (
  <svg width="100%" height="100%" viewBox="768 23 510 365" fill="none" strokeLinejoin="round">
    <g stroke="#4a4a50" strokeWidth="0.600">
      <path d="M972 94L989 84l186 85-57 31-36 18-33-53-77-37z" fill="#959594" />
      <path d="M873 146l99-52v34l-62 34z" fill="#757575" />
      <path d="M972 128l77 37-63 34-76-37z" fill="#c1c1c1" />
      <path d="M1049 165l33 53-25 14-71-33z" fill="#a6a6a6" />
      <path d="M1034 222l48-4-24 14z" fill="#999" />
      <path d="M853 138L973 75.500l16 8.500-114 62z" fill="#c5c2c1" />
      <path d="M853 138l22 8 182 86 17 9v91l-110-51-33-53-78-37z" fill="#929292" />
      <path d="M1074 241l118-64v94l-118 61z" fill="#717171" />
      <path d="M1057 232l118-63 17 8-118 64z" fill="#c6c6c6" />
      <path d="M1074 240l118-63v5l-117 63z" fill="#777" />
    </g>
    <path d="M910 162l62-34" stroke="#2c2c30" strokeWidth="2" />
    <path d="M986 199l63-34" stroke="#55555a" strokeWidth="1.400" />
    <path d="M1069 236l117-62M1073 239l117-62" stroke="#8b8b8b" />
    <path d="M853 138l221 103M973 75.500L1192 177M989 84l186 85" stroke="#2f2f34" strokeWidth="1.200" strokeDasharray="3 1" />
    <path d="M853 191l78 37M964 281l110 51 118-61" stroke="#33333c" strokeWidth="1.500" />
    <path d="M1074 241v91" stroke="#3a3a3e" strokeWidth="3" />
    <path d="M1074.500 246v84" stroke="#a7a7a7" />
    <g stroke="#55555a" strokeWidth="0.700" strokeDasharray="4 2">
      <path d="M857 141l66 59 151 132M857 141l50 59 24 28 143 104M985 88l64 77 58 41M989 88l125 112M858 138l127-51M1062 230l122-58M1078 330l102-130 12-22" />
      <path d="M897 152l31-33" />
    </g>
    <path d="M973 130l-22 52M1034 222l48-4" stroke="#44444a" strokeWidth="0.900" />
    <g strokeWidth="2.600">
      <path d="M801 354l-14-5" stroke="#1fe01f" /><path d="M780 345l9 0-3 7z" fill="#1fe01f" />
      <path d="M801 354l-13 6" stroke="#c01010" /><path d="M781 364l5-7 4 6z" fill="#d01010" />
      <path d="M801.500 354v18" stroke="#1010c0" /><path d="M798 370h7l-3.500 9z" fill="#1010a0" />
    </g>
  </svg>
);

const face = (c: React.ReactNode) => <Svg w={18} h={14}>{c}</Svg>;
const faces: [string, React.ReactNode][] = [
  ["Vorne", face(<><path d="M1 2h11v10H1z" fill="#0c4656" stroke="none" /><path d="M12 2l5 10h-5z" fill={M} stroke="none" /></>)],
  ["Rechts", face(<><path d="M6 2h10v10H6z" fill="#0c4656" stroke="none" /><path d="M6 2L1 12h5z" fill={M} stroke="none" /></>)],
  ["Hinten", face(<path d="M2 2h11l3 10H2z" fill="#0c4656" stroke="none" />)],
  ["Links", <Svg w={19} h={16}><path d="M1 2h10v7H1z" fill={M} stroke="none" /><path d="M10 1h8v9h-8z" fill="#0c4656" stroke="none" /><path d="M10 10h8v5h-8z" fill="#8fb0c0" stroke="none" /></Svg>],
  ["Unten", face(<path d="M0 1h9v5h9v7H0z" fill="#8a8a90" stroke="none" />)],
  ["Oben", face(<path d="M0 12L6 3h12v9z" fill="#0c4656" stroke="none" />)],
];
const isos: [string, React.ReactNode][] = [
  ["Iso 1", face(<><path d="M1 7l8 5 8-4-8-5z" fill="#9aa4a8" stroke="none" /><path d="M10 8l7-1-8 6z" fill={M} stroke="none" /><path d="M4 5l5-3 5 3-5 3z" fill="#0c4656" stroke="none" /></>)],
  ["Iso 2", face(<><path d="M3 4l6 3v7l-6-4z" fill="#a4a9ad" stroke="none" /><path d="M9 6l7-1v4l-7 4z" fill={M} stroke="none" /><path d="M4 3l5-2 5 3-5 3z" fill="#0c4656" stroke="none" /></>)],
  ["Iso 3", face(<><path d="M5 3l4 4-2 7-6-2z" fill="#a4a9ad" stroke="none" /><path d="M8 6l5-3 5 9-5 2z" fill={M} stroke="none" /><path d="M5 2l4-2 4 3-4 3z" fill="#0c4656" stroke="none" /></>)],
  ["Iso 4", face(<><path d="M8 3l3 4-5 7-4-3z" fill="#a4a9ad" stroke="none" /><path d="M10 6l6-3v7L6 14z" fill={M} stroke="none" /><path d="M8 2l4-2 4 3-4 3z" fill="#0c4656" stroke="none" /></>)],
];

export default function App() {
  return (
    <Page>
      <Global />
      <TitleBar>
        <Logo />
        MEDUSA4 6.3 PERSONAL - use for private, non-commercial purposes only - C:\MEDUSA4_PERSONAL_V6_3\med2d\m2d\run\Blech___1.cor.she
      </TitleBar>
      <TabBar>
        <MenuTab $w={46} $kind="file">Datei</MenuTab>
        <MenuTab $w={50}>Start</MenuTab>
        <MenuTab $w={52}>Beschriftung</MenuTab>
        <MenuTab $w={50}>Linien</MenuTab>
        <MenuTab $w={47}>Versch.</MenuTab>
        <MenuTab $w={54}>Rasterbilder</MenuTab>
        <MenuTab $w={48}>Parametrik</MenuTab>
        <MenuTab $w={47} $kind="active">3D</MenuTab>
      </TabBar>
      <Ribbon>
        <RibbonGroup $w={84}>
          <RibbonBody>
            <Big w={30} icon="sheet" lines={["", "Blatt"]} />
            <Big w={34} icon="sheet3d" lines={["3D Blatt", "Attribute"]} />
            <Smalls w={18} icons={["step", "layers", "del"]} />
          </RibbonBody>
          <RibbonLabel>Blatt + Steuerung</RibbonLabel>
        </RibbonGroup>
        <RibbonGroup $w={36}>
          <RibbonBody><Big w={35} icon="group" lines={["Leere", "Gruppe"]} menu /></RibbonBody>
          <RibbonLabel>Gruppen</RibbonLabel>
        </RibbonGroup>
        <RibbonGroup $w={191}>
          <RibbonBody $pad={3}>
            <Big w={40} icon="line" lines={["Voll", "Breit"]} menu />
            <Big w={60} icon="volume" lines={["Volumen", ""]} menu />
            <Smalls w={16} icons={["seg1", "seg2", "axis"]} />
            <Big w={70} icon="rect" lines={["Rechteck", "Ecken"]} menu />
          </RibbonBody>
          <RibbonLabel>Linien</RibbonLabel>
        </RibbonGroup>
        <RibbonGroup $w={60}>
          <RibbonBody>
            <Big w={31} icon="dxz" lines={["DXZ", ""]} menu />
            <Smalls w={27} icons={["plane", "plane2", "pipe"]} menu={[true, true, true]} />
          </RibbonBody>
          <RibbonLabel>Prims</RibbonLabel>
        </RibbonGroup>
        <RibbonGroup $w={86}>
          <RibbonBody>
            <Big w={51} icon="model" lines={["Modellieren+", "Zeichnen"]} menu />
            <Smalls w={20} icons={["eye", "check", "window"]} />
          </RibbonBody>
          <RibbonLabel>Modellieren + Zeichnen</RibbonLabel>
        </RibbonGroup>
        <RibbonGroup $w={55}>
          <RibbonBody>
            <Smalls w={27} icons={["cube", "sel", "text"]} menu={[true, true, true]} />
            <Smalls w={27} icons={["vrml", "vda", "save"]} menu={[true, true, true]} />
          </RibbonBody>
          <RibbonLabel>Werkzeuge</RibbonLabel>
        </RibbonGroup>
        <RibbonGroup $w={154}>
          <RibbonBody>
            <Big w={48} icon="fold" lines={["Falten", "Anzeigen"]} menu />
            <Big w={51} icon="cut" lines={["Trennschnitt", ""]} menu />
            <Smalls w={27} icons={["diag", "gear", "gear2"]} menu={[true, false, false]} />
            <Smalls w={27} icons={["tbg", "slot", "norm"]} menu={[true, false, false]} />
          </RibbonBody>
          <RibbonLabel>SMD</RibbonLabel>
        </RibbonGroup>
      </Ribbon>

      <Main>
        <Sidebar>
          <DashTitle>
            Linie - Dashboard
            <Svg w={7} h={7}><path d="M2.500 2V.5h4v4H5M.5 2.500h4v4h-4z" stroke="#222" /></Svg>
          </DashTitle>
          <SectionHead $h={15}>
            <Svg w={12} h={12}>
              <circle cx="6" cy="6" r="3.200" strokeWidth="2.400" />
              <path d="M6 0v12M0 6h12M2 2l8 8M10 2l-8 8" strokeWidth="1.600" />
              <circle cx="6" cy="6" r="2" fill="#cbcbd7" stroke="none" />
            </Svg>
            Allgemeine Eigenschaften
            <Fold />
          </SectionHead>
          <Form>
            <Field>
              <label htmlFor="stil">Stil (*)</label>
              <Combo id="stil" value="Profil LP0" white />
              <ColorButton type="button" aria-label="Farbe" />
            </Field>
            <Field>
              <label htmlFor="layer">Layer</label>
              <Combo id="layer" value="Blechabwicklung" />
              <LayerButton type="button" aria-label="Layer wählen">{small.layers}</LayerButton>
            </Field>
            <Field>
              <label htmlFor="typ">Typ</label>
              <Combo id="typ" value="3D Profil LP0" indent={19} stroke={12} />
            </Field>
            <Field>
              <label htmlFor="dicke">Dicke</label>
              <Combo id="dicke" value="0.18" indent={29} stroke={22} />
            </Field>
            <CheckRow><Check type="checkbox" />Füllfläche</CheckRow>
          </Form>
          <SectionHead $h={12}><span />Werkzeuge<Fold /></SectionHead>
          {tools.map((g, i) => (
            <React.Fragment key={i}>
              {g.title && <SubHead>{g.title}<Fold /></SubHead>}
              <ToolGrid $top={g.title ? 0 : 2}>
                {g.items.map(([n, icon]) => <ToolButton key={n} aria-label={n}>{icon}</ToolButton>)}
              </ToolGrid>
            </React.Fragment>
          ))}
        </Sidebar>

        <Work>
          <Canvas>
            <Drawing />
            <SnapBar>
              {snaps.map(([n, icon], i) => <SnapButton key={n} $on={i === 0} aria-label={n}>{icon}</SnapButton>)}
            </SnapBar>
            <QuickBar>
              {quick.map((q, i) => (q ? <QuickButton key={i} aria-label={q[0]}>{q[1]}</QuickButton> : <QuickSep key={i} />))}
            </QuickBar>
          </Canvas>
          <SheetTabs>
            <SheetTab>start <CloseMark c="#66666e" /></SheetTab>
            <SheetTab>Blech___1.idl * <CloseMark c="#66666e" /></SheetTab>
            <SheetTab $on>Blech___1.cor * <CloseMark c="#d0243c" /></SheetTab>
          </SheetTabs>
        </Work>
      </Main>

      <Status>
        <Hint>
          <Svg w={18} h={18}><path d="M1 17L7 8l8-6" stroke={G} strokeWidth="1.400" /><path d="M7 8l8 7" strokeWidth="1.400" /><Dot x={15} y={2.500} /><Dot x={15} y={15} /></Svg>
          Punkt anwählen
        </Hint>
        <Message>
          <Svg w={20} h={20}>
            <path d="M4 1h12q3 0 3 3v8q0 3-3 3h-5l-5 4 1-4H4q-3 0-3-3V4q0-3 3-3z" fill={D} stroke="none" />
            <path d="M7 5.500h8M7 8h8M7 10.500h8M4.500 5.500h1M4.500 8h1M4.500 10.500h1" stroke="#e4eef0" />
          </Svg>
        </Message>
        <Coords>X +377.1846<br />Y +352.7168</Coords>
        <StatusInput aria-label="Blatt" defaultValue="Blatt" />
        <Scale>1:1<br />(1:1)</Scale>
        <StatusIcons $gap={9}>
          <Svg w={20} h={20}>
            <path d="M3 7h12v11H3z" fill={M} stroke="none" />
            <path d="M4 10.500h10M4 13.500h10M6.500 8v9M9.500 8v9M12 8v9" stroke="#e9f0f3" />
            <path d="M8 6l4-4h7v6h-4l-4 2z" fill={D} stroke="none" />
            <path d="M15 1h4v7h-4z" fill={M} stroke="none" />
          </Svg>
          <Svg w={16} h={20}>
            <g stroke="none">
              <circle cx="10" cy="3" r="2" fill={D} /><path d="M7 5h6l1 6-2 5H8z" fill={M} />
              <path d="M11 5h3v7l-2 3z" fill={D} />
              <circle cx="5" cy="5" r="2" fill={D} /><path d="M2 8h6l1 5-2 6H4l-2-6z" fill={D} />
            </g>
          </Svg>
        </StatusIcons>
        <Spacer />
        <StatusIcons $gap={7}>
          <Svg w={20} h={20}>
            <path d="M1 8l3-2h12l3 2v11H1z" fill={M} stroke="none" />
            <path d="M5 4h10v8l-5 3-5-3z" fill="#a5adb3" stroke="none" /><path d="M7 7h6v4H7z" fill={D} stroke="none" />
            <path d="M10 1l2 3H8z" fill={D} stroke="none" />
          </Svg>
          <Svg w={22} h={18}><path d="M6 15q-4 0-4-3.500T6 8q0-5 5-5 3 0 4 3 2 0 3 2.500 3 1 3 3.500 0 3-3 3z" stroke="#333" strokeWidth="1.300" /></Svg>
          <span />
          <Svg w={18} h={20}><path d="M0 1h12v18H0z" fill="#a3a7ae" stroke="none" /><path d="M12 1h6v18h-6z" fill={D} stroke="none" /><path d="M3 10l6-5v10z" fill={D} stroke="none" /></Svg>
        </StatusIcons>
      </Status>

      <ModelWindow>
        <ModelTitle>
          <Logo />
          Modellanzeige
          <CloseButton aria-label="Schließen"><Svg w={8} h={8}><path d="M.5.5l7 7m0-7l-7 7" stroke="#8d8d92" /></Svg></CloseButton>
        </ModelTitle>
        <View><Model /></View>
        <ViewRow>
          <Group $h={39}>
            <Legend>Flächen-Ansichten</Legend>
            <ViewButtons>{faces.map(([n, c]) => <ViewButton key={n} aria-label={n}>{c}</ViewButton>)}</ViewButtons>
          </Group>
          <Group $h={39}>
            <Legend>Isometrische Ansichten</Legend>
            <ViewButtons>{isos.map(([n, c]) => <ViewButton key={n} aria-label={n}>{c}</ViewButton>)}</ViewButtons>
          </Group>
          <Group $h={39}>
            <Legend>Zurücksetzen</Legend>
            <ViewButtons><ViewButton aria-label="Ansicht zurücksetzen"><Axes a={D} b={R} c="#2f9a50" /></ViewButton></ViewButtons>
          </Group>
          <CollapseButton aria-label="Einklappen">
            <Svg w={14} h={13}><path d="M0 1.500h14" strokeWidth="2" /><path d="M0 4.500h14L7 13z" fill={D} stroke="none" /></Svg>
          </CollapseButton>
        </ViewRow>
        <Splitter />
        <Group $h={107}>
          <Legend>Erweiterte Ansichtssteuerung</Legend>
          <Advanced>
            <RotateCol>
              <RotateTitle>Drehen</RotateTitle>
              <RotateRow><RotateIcon><Axes a="#7f8d94" b="#7f8d94" c={R} turn={R} /></RotateIcon><Slider type="range" aria-label="Drehen X" defaultValue={0} $fill={0} /></RotateRow>
              <RotateRow><RotateIcon><Axes a="#7f8d94" b="#2f9a50" c="#7f8d94" turn="#2f9a50" /></RotateIcon><Slider type="range" aria-label="Drehen Y" defaultValue={50} $fill={50} /></RotateRow>
              <RotateRow><RotateIcon><Axes a={D} b="#7f8d94" c="#7f8d94" turn={D} /></RotateIcon><Slider type="range" aria-label="Drehen Z" defaultValue={50} $fill={50} /></RotateRow>
            </RotateCol>
            <ValueCol>
              <ColTitle>Verschieben</ColTitle>
              <SpinField label="Verschieben X" value="0.00" />
              <SpinField label="Verschieben Y" value="0.00" />
            </ValueCol>
            <ValueCol>
              <ColTitle>Zoom</ColTitle>
              <SpinField label="Zoom" value="1.00" />
              <span />
              <FlatButton>Detailebene</FlatButton>
            </ValueCol>
          </Advanced>
        </Group>
        <Actions>
          <FlatButton>Modell</FlatButton>
          <FlatButton>Snapshot</FlatButton>
          <FlatButton disabled>Flächenauswahl anwenden</FlatButton>
        </Actions>
      </ModelWindow>
    </Page>
  );
}
